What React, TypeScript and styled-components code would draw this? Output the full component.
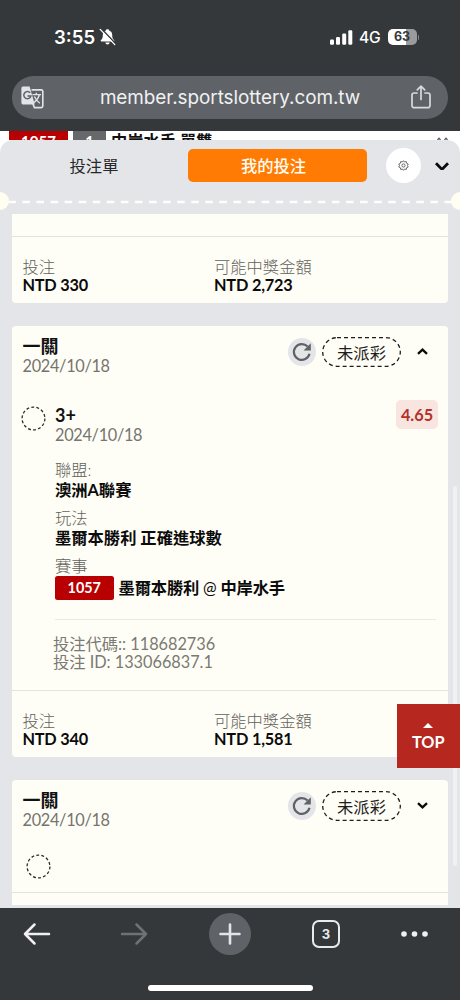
import React from "react";
import styled, { createGlobalStyle } from "styled-components";

const ui = `Inter, "Noto Sans CJK TC", sans-serif`;
const body = `Lato, "Noto Sans CJK TC", sans-serif`;

const GlobalStyle = createGlobalStyle`
  * { box-sizing: border-box; }
  html, body { margin: 0; padding: 0; }
  body { background: #35383b; font-family: ${body}; overflow: hidden; }
  button { border: 0; padding: 0; background: none; font: inherit; color: inherit; }
  svg { display: block; flex: none; }
`;

const Phone = styled.div`
  position: relative;
  width: 460px;
  height: 1000px;
  display: flex;
  flex-direction: column;
  overflow: hidden;
  background: #35383b;
`;

const StatusBar = styled.header`
  flex: none;
  height: 76px;
  padding: 0 41px 2px 54px;
  display: flex;
  align-items: center;
  font-family: ${ui};
  color: #fff;
`;

const Clock = styled.span`
  font-size: 18.6px;
  font-weight: 600;
  letter-spacing: 0;
  margin-right: 4px;
`;

const StatusRight = styled.div`
  margin-left: auto;
  display: flex;
  align-items: center;
`;

const Network = styled.span`
  font-size: 15.6px;
  font-weight: 500;
  letter-spacing: -0.2px;
  margin: 0 7px 0 6.5px;
`;

const Battery = styled.div`
  width: 29px;
  height: 16px;
  border-radius: 5px;
  background: linear-gradient(90deg, #fff 63%, #999b9d 63%);
  color: #35383b;
  font-size: 12.5px;
  font-weight: 700;
  line-height: 16px;
  text-align: center;
`;

const BatteryTip = styled.div`
  width: 1.5px;
  height: 5px;
  margin-left: 1px;
  border-radius: 0 2px 2px 0;
  background: #85888b;
`;

const AddressBar = styled.div`
  flex: none;
  height: 42.5px;
  margin: 0 12px 12px;
  padding: 0 17px 0 9px;
  border-radius: 22px;
  background: #5f6367;
  display: flex;
  align-items: center;
  justify-content: space-between;
`;

const Url = styled.span`
  padding-left: 5px;
  font-family: ${ui};
  font-size: 18.9px;
  color: #f1f1f2;
  letter-spacing: -0.05px;
  white-space: nowrap;
`;

const Page = styled.main`
  flex: 1;
  min-height: 0;
  display: flex;
  flex-direction: column;
  background: #fff;
  overflow: hidden;
`;

const Behind = styled.div`
  flex: none;
  height: 9px;
  padding: 0 12px 0 9px;
  display: flex;
  gap: 5px;
  overflow: hidden;
  color: #111;
  font-size: 16.3px;
  font-weight: 700;
  line-height: 19px;
`;

const BehindTag = styled.span<{ $w: number; $bg: string }>`
  width: ${(p) => p.$w}px;
  height: 24px;
  background: ${(p) => p.$bg};
  color: #fff;
  text-align: center;
  font-size: 15px;
  line-height: 20px;
`;

const BehindMark = styled.svg`
  margin: 6px 0 0 auto;
`;

const Sheet = styled.section`
  flex: 1;
  min-height: 0;
  display: flex;
  flex-direction: column;
  background: #e4e5e8;
  border-radius: 13px 13px 0 0;
  overflow: hidden;
`;

const Tabs = styled.nav`
  flex: none;
  height: 51px;
  padding-right: 11px;
  display: flex;
  align-items: center;
`;

const Tab = styled.button<{ $active?: boolean }>`
  width: ${(p) => (p.$active ? 179 : 188)}px;
  height: 33px;
  padding-right: ${(p) => (p.$active ? 8 : 0)}px;
  border-radius: 5px;
  background: ${(p) => (p.$active ? "#ff7b03" : "transparent")};
  color: ${(p) => (p.$active ? "#fffdf2" : "#26282a")};
  font-size: 16.3px;
  font-weight: ${(p) => (p.$active ? 500 : 400)};
  line-height: 33px;
`;

const Settings = styled.button`
  width: 35px;
  height: 35px;
  margin: 0 14px 0 19px;
  border-radius: 50%;
  background: #fff;
  display: grid;
  place-items: center;
`;

const Perforation = styled.svg`
  width: 460px;
  height: 22px;
`;

const Scroller = styled.div`
  flex: 1;
  min-height: 0;
  padding: 1.8px 12px 0;
  overflow: hidden;
  display: flex;
  flex-direction: column;
`;

const Card = styled.article<{ $h: number; $radius?: string }>`
  flex: none;
  height: ${(p) => p.$h}px;
  margin-bottom: 23.7px;
  background: #fffef6;
  border-radius: ${(p) => p.$radius ?? "4px"};
  display: flex;
  flex-direction: column;
`;

const CardHead = styled.div`
  flex: none;
  height: 70px;
  padding: 10.5px 20px 0 10.5px;
  display: flex;
  align-items: flex-start;
`;

const HeadActions = styled.div`
  margin-left: auto;
  display: flex;
  align-items: center;
`;

const Title = styled.div`
  font-size: 18px;
  font-weight: 700;
  line-height: 19px;
  color: #111;
`;

const Muted = styled.div<{ $lh?: number }>`
  font-size: 16.3px;
  line-height: ${(p) => p.$lh ?? 18}px;
  color: #62625d;
  font-weight: 300;
  white-space: nowrap;
`;

const DateText = styled(Muted)`
  font-weight: 400;
  line-height: 20px;
  letter-spacing: -0.3px;
  color: #75756f;
`;

const Code = styled(Muted)`
  font-weight: 400;
  letter-spacing: -0.02px;
  color: #7a7a74;
`;

const Strong = styled.div<{ $lh?: number; $track?: number }>`
  font-size: 16.3px;
  line-height: ${(p) => p.$lh ?? 18}px;
  font-weight: 700;
  letter-spacing: ${(p) => p.$track ?? 0}px;
  color: #0b0b0b;
  white-space: nowrap;
`;

const Versus = styled.span`
  font-weight: 400;
`;

const Refresh = styled.button`
  width: 28px;
  height: 28px;
  margin-right: 6px;
  border-radius: 50%;
  background: #e4e5e8;
  display: grid;
  place-items: center;
`;

const Status = styled.div`
  position: relative;
  width: 79px;
  height: 30px;
  margin-right: 16px;
  font-size: 16.3px;
  line-height: 31px;
  text-align: center;
  color: #1d1d1b;
`;

const StatusOutline = styled.svg`
  position: absolute;
  inset: 0;
`;

const Leg = styled.div`
  flex: none;
  height: 64px;
  padding: 0 10px 0 9px;
  display: flex;
  align-items: flex-start;
`;

const LegIcon = styled.div`
  padding-top: 9.5px;
`;

const LegText = styled.div`
  margin: 9.6px 0 0 9px;
`;

const CollapsedLeg = styled.div`
  flex: none;
  height: 42px;
  padding: 3.5px 13.5px 0;
`;

const Odds = styled.div`
  width: 42px;
  height: 29px;
  margin: 4.2px 0 0 auto;
  border-radius: 5px;
  background: #f9e5df;
  color: #b3322b;
  font-size: 16.3px;
  font-weight: 700;
  line-height: 30px;
  text-align: center;
`;

const Details = styled.div`
  margin: 0 12px 0 43px;
  padding-bottom: 19px;
  border-bottom: 1.5px solid #ebe9e4;
`;

const Field = styled.div`
  height: 48px;
`;

const Match = styled.div`
  display: flex;
  align-items: center;
  gap: 5px;
`;

const MatchNo = styled.span`
  width: 58.5px;
  height: 24px;
  border-radius: 2.5px;
  background: #b80003;
  color: #fff;
  font-size: 14.4px;
  font-weight: 700;
  line-height: 24px;
  text-align: center;
`;

const Codes = styled.div`
  padding: 15px 0 0 41px;
`;

const Amounts = styled.footer`
  margin-top: auto;
  height: 66.5px;
  padding: 20.5px 10.5px 0;
  border-top: 1px solid #e6e3de;
  display: grid;
  grid-template-columns: 191.5px 1fr;
`;

const Remainder = styled.div`
  margin-top: auto;
  height: 13px;
  border-top: 1px solid #e6e3de;
`;

const ScrollThumb = styled.div`
  position: absolute;
  left: 453px;
  top: 486px;
  width: 4px;
  height: 380px;
  border-radius: 2px;
  background: #f0f1f4;
`;

const TopButton = styled.button`
  position: absolute;
  right: 0;
  top: 704px;
  width: 63.5px;
  height: 64px;
  background: #b5271f;
  color: #fff;
  display: flex;
  flex-direction: column;
  align-items: center;
  padding-top: 19px;
  font-size: 16.3px;
  font-weight: 700;
  line-height: 20px;
  gap: 4px;
`;

const BottomBar = styled.nav`
  flex: none;
  height: 92px;
  padding-top: 5px;
  display: flex;
  flex-direction: column;
  background: #35383b;
`;

const Tools = styled.div`
  height: 42px;
  display: grid;
  grid-template-columns: 74px 119px 74px 118px 58px;
  align-items: center;
  justify-items: center;
`;

const NewTab = styled.button`
  width: 42px;
  height: 42px;
  border-radius: 50%;
  background: #5f6367;
  display: grid;
  place-items: center;
`;

const TabCount = styled.button`
  width: 28px;
  height: 28px;
  border: 2.2px solid #e9eaed;
  border-radius: 7px;
  color: #e9eaed;
  font-family: ${ui};
  font-size: 13px;
  font-weight: 700;
`;

const HomeIndicator = styled.div`
  align-self: center;
  width: 165px;
  height: 5.5px;
  margin-top: 30px;
  border-radius: 3px;
  background: #fff;
`;

const BellOff = () => (
  <svg width="17" height="18" viewBox="0 0 17 18">
    <path d="M8.5 1.2c1 0 1.5.5 1.6 1.2 2 .6 3.1 2.2 3.1 4.5 0 3 .6 4 1.8 5.2.6.6.3 1.5-.6 1.5H2.6c-.9 0-1.2-.9-.6-1.5 1.2-1.2 1.8-2.2 1.8-5.2 0-2.3 1.1-3.9 3.1-4.5.1-.7.6-1.2 1.6-1.2z" fill="#fff" />
    <path d="M6.3 14.6h4.4c-.2 1.2-1 2-2.2 2s-2-.8-2.2-2z" fill="#fff" />
    <path d="M2.2.6l14.3 15" stroke="#35383b" strokeWidth="1.5" />
    <path d="M1.2 1.4l14.6 15.2" stroke="#fff" strokeWidth="1.3" strokeLinecap="round" />
  </svg>
);

const Signal = () => (
  <svg width="23" height="15" viewBox="0 0 23 15" fill="#fff">
    <rect x="0" y="9.5" width="4" height="5.3" rx="1.2" />
    <rect x="6" y="7" width="4" height="7.8" rx="1.2" />
    <rect x="12.2" y="3.6" width="4" height="11.2" rx="1.2" />
    <rect x="18.3" y="0.3" width="4" height="14.5" rx="1.2" />
  </svg>
);

const Translate = () => (
  <svg width="23" height="23" viewBox="0 0 23 23">
    <path d="M10.5 3.9H20.2a1.6 1.6 0 0 1 1.6 1.6V20a1.6 1.6 0 0 1-1.6 1.6H13.4L11.6 17" fill="none" stroke="#e3e4e8" strokeWidth="1.6" />
    <path d="M2 .5H8.6L13.8 18.4H2A1.6 1.6 0 0 1 .4 16.8V2.1A1.6 1.6 0 0 1 2 .5z" fill="#e3e4e8" />
    <path d="M9.2 6.9A3.6 3.6 0 1 0 9.9 10H6.4" fill="none" stroke="#5f6367" strokeWidth="1.5" />
    <path d="M11.4 8.6H20M15.3 6.8v1.8M18.3 8.8c-.8 3.4-2.6 5.7-5.2 7.5M13.4 10.6c1 2.4 3.2 4.9 5.4 6.6" fill="none" stroke="#e3e4e8" strokeWidth="1.4" />
  </svg>
);

const Share = () => (
  <svg width="20" height="24" viewBox="0 0 20 24" fill="none" stroke="#d9dadd" strokeWidth="1.7" strokeLinecap="round" strokeLinejoin="round">
    <path d="M6 8H3.2A2.2 2.2 0 0 0 1 10.2V20.5A2.2 2.2 0 0 0 3.2 22.7H16.8A2.2 2.2 0 0 0 19 20.5V10.2A2.2 2.2 0 0 0 16.8 8H14" />
    <path d="M10 14.5V1.3M6.3 4.8L10 1.2l3.7 3.6" />
  </svg>
);

const Gear = () => (
  <svg width="11" height="11" viewBox="0 0 24 24" fill="none" stroke="#555" strokeWidth="1.9">
    <circle cx="12" cy="12" r="3.5" />
    <path d="M12 1.5l2.4 2.9 3.7-1 .7 3.8 3.5 1.5-1.6 3.3 1.6 3.3-3.5 1.5-.7 3.8-3.7-1L12 22.5l-2.4-2.9-3.7 1-.7-3.8-3.5-1.5L3.3 12 1.7 8.7l3.5-1.5.7-3.8 3.7 1z" />
  </svg>
);

const ChevronSvg = styled.svg<{ $drop?: number }>`
  margin-top: ${(p) => p.$drop ?? 0}px;
`;

const Chevron = ({ w, up = false, stroke, drop }: { w: number; up?: boolean; stroke: number; drop?: number }) => {
  const h = w * 0.64;
  return (
    <ChevronSvg $drop={drop} width={w} height={h} viewBox={`0 0 ${w} ${h}`} fill="none" stroke="#0b0b0b" strokeWidth={stroke}>
      <path d={up ? `M1 ${h - 1.2}L${w / 2} 1.6L${w - 1} ${h - 1.2}` : `M1 1.2L${w / 2} ${h - 1.6}L${w - 1} 1.2`} />
    </ChevronSvg>
  );
};

const Reload = () => (
  <svg width="20" height="20" viewBox="0 0 20 20">
    <path d="M15.6 4.6A7.9 7.9 0 1 0 17.5 11.8" fill="none" stroke="#606265" strokeWidth="2.2" />
    <path d="M18.8 1.2V8.4H11.6z" fill="#606265" />
  </svg>
);

const Pending = () => (
  <svg width="25" height="25" viewBox="0 0 25 25">
    <circle cx="12.5" cy="12.5" r="11.4" fill="none" stroke="#2a2a28" strokeWidth="1.3" strokeDasharray="2.9 2.216" />
  </svg>
);

const Arrow = ({ right = false }: { right?: boolean }) => (
  <svg width="28" height="24" viewBox="0 0 28 24" fill="none" stroke={right ? "#6f7174" : "#f0f0f2"} strokeWidth="2.5" strokeLinecap="round" strokeLinejoin="round">
    <path d={right ? "M2 12H26M16.5 2.5L26 12L16.5 21.5" : "M26 12H2M11.5 2.5L2 12L11.5 21.5"} />
  </svg>
);

const TicketHead = ({ open }: { open?: boolean }) => (
  <CardHead>
    <div>
      <Title>一關</Title>
      <DateText>2024/10/18</DateText>
    </div>
    <HeadActions>
      <Refresh aria-label="refresh"><Reload /></Refresh>
      <Status>
        <StatusOutline width="79" height="30" viewBox="0 0 79 30">
          <rect x="0.7" y="0.7" width="77.6" height="28.6" rx="14.3" fill="none" stroke="#1d1d1b" strokeWidth="1.3" strokeDasharray="4 3" />
        </StatusOutline>
        未派彩
      </Status>
      <Chevron w={11} up={open} stroke={2.3} />
    </HeadActions>
  </CardHead>
);

const Totals = ({ stake, win }: { stake: string; win: string }) => (
  <Amounts>
    <div>
      <Muted>投注</Muted>
      <Strong $lh={17.4} $track={-0.22}>{stake}</Strong>
    </div>
    <div>
      <Muted>可能中獎金額</Muted>
      <Strong $lh={17.4} $track={-0.18}>{win}</Strong>
    </div>
  </Amounts>
);

export default function App() {
  return (
    <Phone>
      <GlobalStyle />
      <StatusBar>
        <Clock>3:55</Clock>
        <BellOff />
        <StatusRight>
          <Signal />
          <Network>4G</Network>
          <Battery>63</Battery>
          <BatteryTip />
        </StatusRight>
      </StatusBar>
      <AddressBar>
        <Translate />
        <Url>member.sportslottery.com.tw</Url>
        <Share />
      </AddressBar>
      <Page>
        <Behind>
          <BehindTag $w={59} $bg="#b80003">1057</BehindTag>
          <BehindTag $w={33} $bg="#666869">1</BehindTag>
          <span>中岸水手 單雙</span>
          <BehindMark width="11" height="4" viewBox="0 0 11 4" fill="none" stroke="#55585a" strokeWidth="1.2">
            <path d="M.5 3L2 1.2L3.5 3M7.5 3L9 1.2L10.5 3" />
          </BehindMark>
        </Behind>
        <Sheet>
          <Tabs>
            <Tab>投注單</Tab>
            <Tab $active>我的投注</Tab>
            <Settings aria-label="settings"><Gear /></Settings>
            <Chevron w={14} stroke={2.8} drop={2} />
          </Tabs>
          <Perforation viewBox="0 0 460 22">
            <path d="M8.3 11H454" stroke="#fffef8" strokeWidth="2.6" strokeDasharray="7.6 6.47" />
            <circle cx="0" cy="10" r="9" fill="#fffef0" />
            <circle cx="460" cy="10" r="9" fill="#fffef0" />
          </Perforation>
          <Scroller>
            <Card $h={88.3} $radius="0 0 4px 4px">
              <Totals stake="NTD 330" win="NTD 2,723" />
            </Card>
            <Card $h={430.3}>
              <TicketHead open />
              <Leg>
                <LegIcon><Pending /></LegIcon>
                <LegText>
                  <Title>3+</Title>
                  <DateText>2024/10/18</DateText>
                </LegText>
                <Odds>4.65</Odds>
              </Leg>
              <Details>
                <Field>
                  <Muted $lh={20}>聯盟:</Muted>
                  <Strong $lh={20}>澳洲A聯賽</Strong>
                </Field>
                <Field>
                  <Muted $lh={20}>玩法</Muted>
                  <Strong $lh={20}>墨爾本勝利 正確進球數</Strong>
                </Field>
                <Muted $lh={20}>賽事</Muted>
                <Match>
                  <MatchNo>1057</MatchNo>
                  <Strong $track={-0.13}>墨爾本勝利 <Versus>@</Versus> 中岸水手</Strong>
                </Match>
              </Details>
              <Codes>
                <Code>投注代碼:: 118682736</Code>
                <Code>投注 ID: 133066837.1</Code>
              </Codes>
              <Totals stake="NTD 340" win="NTD 1,581" />
            </Card>
            <Card $h={124.6} $radius="4px 4px 0 0">
              <TicketHead />
              <CollapsedLeg><Pending /></CollapsedLeg>
              <Remainder />
            </Card>
          </Scroller>
        </Sheet>
      </Page>
      <ScrollThumb />
      <TopButton>
        <svg width="10" height="5" viewBox="0 0 10 5"><path d="M0 5L5 0L10 5z" fill="#fff" /></svg>
        TOP
      </TopButton>
      <BottomBar>
        <Tools>
          <Arrow />
          <Arrow right />
          <NewTab aria-label="new tab">
            <svg width="22" height="22" viewBox="0 0 22 22" stroke="#e3e4e7" strokeWidth="2.6" strokeLinecap="round">
              <path d="M11 1.5V20.5M1.5 11H20.5" />
            </svg>
          </NewTab>
          <TabCount>3</TabCount>
          <svg width="27" height="6" viewBox="0 0 27 6" fill="#f0f0f2">
            <circle cx="3" cy="3" r="2.8" />
            <circle cx="13.5" cy="3" r="2.8" />
            <circle cx="24" cy="3" r="2.8" />
          </svg>
        </Tools>
        <HomeIndicator />
      </BottomBar>
    </Phone>
  );
}
